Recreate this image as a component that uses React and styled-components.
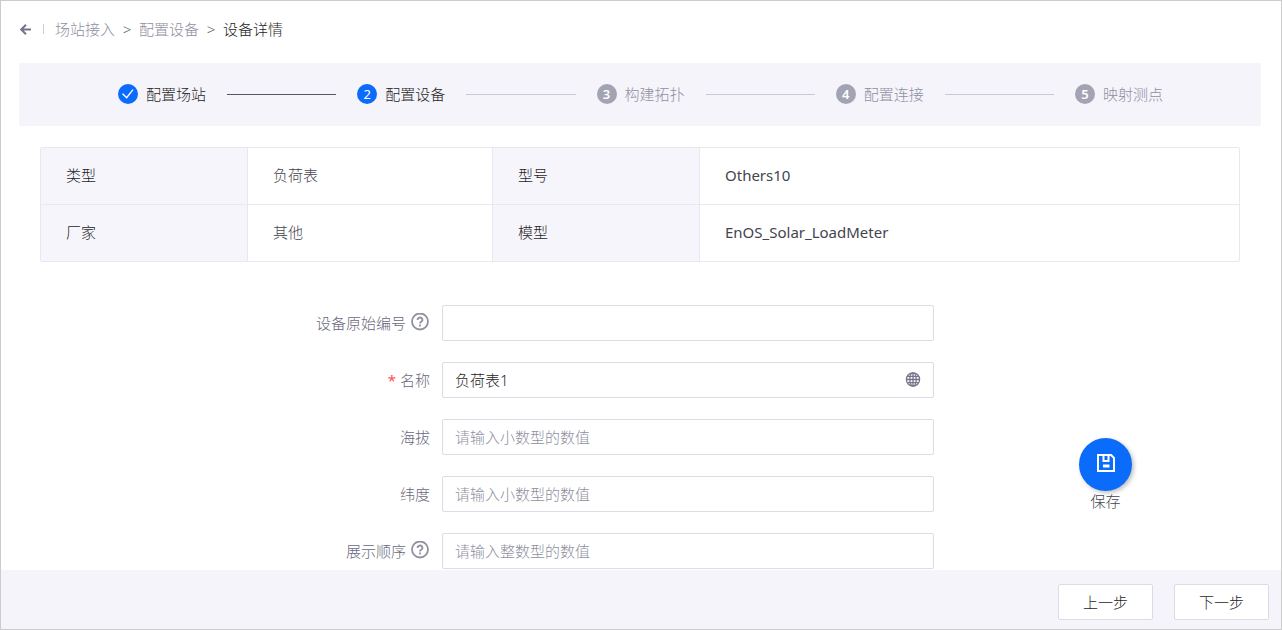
import React from "react";
import styled, { createGlobalStyle, ThemeProvider } from "styled-components";

const theme = {
  brand: "#0b6cfb",
  primary: "#1e1e26",
  secondary: "#44444e",
  label: "#68687c",
  muted: "#8f8fa1",
  error: "#ff4d55",
  surface: "#f5f4fa",
  borderColor: "#dcdce6",
  lineColor: "#e8e8ee"
};

const GlobalStyle = createGlobalStyle`
  * {
    box-sizing: border-box;
  }
  body {
    margin: 0;
    background-color: #fff;
  }
  body, button, input {
    font-family: "Noto Sans", "Noto Sans CJK SC", sans-serif;
    font-size: 15px;
    font-weight: 300;
    line-height: 20px;
  }
`;

const Page = styled.div`
  display: flex;
  flex-direction: column;
  height: 100vh;
  border: 1px solid #ccc;
  color: ${props => props.theme.primary};
`;

const Content = styled.main`
  flex: 1;
  min-height: 0;
  overflow-y: auto;
`;

const Breadcrumb = styled.nav`
  display: flex;
  align-items: center;
  height: 62px;
  padding: 0 18px 6px;
  color: ${props => props.theme.muted};
`;

const BackButton = styled.button`
  display: flex;
  padding: 0;
  border: 0;
  background: none;
  cursor: pointer;
  color: #74748a;
`;

const Divider = styled.span`
  width: 1px;
  height: 10px;
  margin: 0 11px 0 10px;
  background-color: #cdcdd6;
`;

const Crumb = styled.a`
  color: ${props => (props.$active ? props.theme.primary : props.theme.muted)};
  text-decoration: none;
`;

const Separator = styled.span`
  width: 24px;
  text-align: center;
  font-size: 15px;
  color: ${props => props.theme.label};
`;

const Steps = styled.ol`
  display: flex;
  align-items: center;
  gap: 21px;
  height: 63px;
  margin: 0 20px 0 18px;
  padding: 0 98px 1px 99px;
  list-style: none;
  background-color: ${props => props.theme.surface};
`;

const Step = styled.li`
  display: flex;
  align-items: center;
  gap: 21px;
  flex: ${props => (props.$last ? "none" : "1")};
`;

const StepTitle = styled.span`
  display: flex;
  align-items: center;
  gap: 8px;
  white-space: nowrap;
  color: ${props => (props.$reached ? props.theme.primary : props.theme.muted)};
`;

const StepBadge = styled.span`
  display: flex;
  align-items: center;
  justify-content: center;
  width: 20px;
  height: 20px;
  border-radius: 50%;
  font-size: 13px;
  font-weight: ${props => (props.$reached ? 400 : 600)};
  color: #fff;
  background-color: ${props => (props.$reached ? props.theme.brand : "#a3a3b3")};
`;

const StepLine = styled.span`
  flex: 1;
  height: 1px;
  background-color: ${props => (props.$done ? "#55555f" : "#c9c9d6")};
`;

const Details = styled.table`
  width: calc(100% - 80px);
  margin: 21px 40px 0 39px;
  table-layout: fixed;
  border-spacing: 0;
  border: 1px solid ${props => props.theme.lineColor};
  border-radius: 2px;
  tr + tr > * {
    height: 57px;
    border-top: 1px solid ${props => props.theme.lineColor};
  }
`;

const DetailLabel = styled.th`
  width: 207px;
  height: 56px;
  padding: 0 25px 2px;
  text-align: left;
  font-weight: inherit;
  background-color: #f6f5fb;
  border-right: 1px solid ${props => props.theme.lineColor};
`;

const DetailValue = styled.td`
  width: ${props => (props.$wide ? "auto" : "245px")};
  height: 56px;
  padding: 0 25px 2px;
  font-weight: ${props => (props.$wide ? 400 : 300)};
  color: ${props => props.theme.secondary};
  border-right: ${props => (props.$wide ? 0 : 1)}px solid
    ${props => props.theme.lineColor};
`;

const Body = styled.div`
  display: grid;
  grid-template-columns: 1fr 343px;
  padding: 43px 4px 0 39px;
`;

const DeviceForm = styled.form`
  display: grid;
  gap: 21px;
`;

const FormItem = styled.div`
  display: grid;
  grid-template-columns: 65fr 82fr;
  align-items: center;
  gap: 12px;
`;

const Label = styled.label`
  display: flex;
  align-items: center;
  justify-content: flex-end;
  gap: 4px;
  color: ${props => props.theme.label};
`;

const Required = styled.span`
  font-weight: 400;
  color: ${props => props.theme.error};
`;

const InputBox = styled.div`
  display: flex;
  align-items: center;
  height: 36px;
  padding: 0 12px;
  border: 1px solid ${props => props.theme.borderColor};
  border-radius: 2px;
  color: #74748a;
`;

const Input = styled.input`
  flex: 1;
  min-width: 0;
  padding: 0;
  border: 0;
  outline: 0;
  background: none;
  color: ${props => props.theme.primary};
  &::placeholder {
    color: ${props => props.theme.muted};
    opacity: 1;
  }
`;

const SaveArea = styled.aside`
  display: flex;
  flex-direction: column;
  align-items: center;
  padding-top: 133px;
`;

const SaveButton = styled.button`
  display: flex;
  align-items: center;
  justify-content: center;
  width: 53px;
  height: 53px;
  padding: 0 0 3px;
  border: 0;
  border-radius: 50%;
  cursor: pointer;
  color: #fff;
  background-color: ${props => props.theme.brand};
  box-shadow: 2px 2px 4px rgba(0, 0, 0, 0.25);
`;

const SaveText = styled.span`
  color: ${props => props.theme.secondary};
`;

const Footer = styled.footer`
  display: flex;
  justify-content: flex-end;
  gap: 21px;
  padding: 14px 12px 9px;
  background-color: ${props => props.theme.surface};
`;

const Button = styled.button`
  width: 95px;
  height: 36px;
  padding: 0 0 1px;
  border: 1px solid ${props => props.theme.borderColor};
  border-radius: 2px;
  cursor: pointer;
  color: ${props => props.theme.primary};
  background-color: #fff;
`;

function ArrowIcon() {
  return (
    <svg width="14" height="14" viewBox="0 0 14 14" fill="none" stroke="currentColor" strokeWidth="2">
      <path d="M7 2.7L2.2 7.5L7 12.3M2.5 7.5H12" />
    </svg>
  );
}

function CheckIcon() {
  return (
    <svg width="20" height="20" viewBox="0 0 20 20" fill="none" stroke="currentColor" strokeWidth="1.4">
      <path d="M4.6 9.8L8.6 13.8L15 5.6" />
    </svg>
  );
}

function HelpIcon() {
  return (
    <svg width="20" height="20" viewBox="0 0 20 20" fill="none" stroke="#9191a2" strokeWidth="1.8">
      <circle cx="10" cy="8.5" r="8" />
      <path d="M7.6 7A2.4 2.3 0 1 1 11.2 8.8Q10 9.5 10 10.5" />
      <path d="M10 11.6V13.4" />
    </svg>
  );
}

function GlobeIcon() {
  return (
    <svg width="16" height="16" viewBox="0 0 16 16" fill="none" stroke="currentColor" strokeWidth="1.3">
      <circle cx="8" cy="7.5" r="6.6" />
      <ellipse cx="8" cy="7.5" rx="3.2" ry="6.6" />
      <path d="M8 0.9V14.1M1.4 7.5H14.6M2.4 4.4H13.6M2.4 10.6H13.6" />
    </svg>
  );
}

function SaveIcon() {
  return (
    <svg width="18" height="18" viewBox="0 0 18 18" fill="none" stroke="currentColor" strokeWidth="2">
      <path d="M1 1H14L17 4V17H1Z" />
      <path d="M6.5 1V7H11.5V1" />
      <path d="M6 12H12.5" strokeWidth="3" />
    </svg>
  );
}

const steps = ["配置场站", "配置设备", "构建拓扑", "配置连接", "映射测点"];
const current = 1;

const details = [
  [["类型", "负荷表"], ["型号", "Others10"]],
  [["厂家", "其他"], ["模型", "EnOS_Solar_LoadMeter"]]
];

const fields = [
  { name: "serial", label: "设备原始编号", help: true },
  { name: "name", label: "名称", required: true, value: "负荷表1", global: true },
  { name: "altitude", label: "海拔", placeholder: "请输入小数型的数值" },
  { name: "latitude", label: "纬度", placeholder: "请输入小数型的数值" },
  { name: "order", label: "展示顺序", help: true, placeholder: "请输入整数型的数值" }
];

function StepBar() {
  return (
    <Steps>
      {steps.map((title, i) => {
        const last = i === steps.length - 1;
        return (
          <Step key={title} $last={last}>
            <StepTitle $reached={i <= current}>
              <StepBadge $reached={i <= current}>
                {i < current ? <CheckIcon /> : i + 1}
              </StepBadge>
              {title}
            </StepTitle>
            {!last && <StepLine $done={i < current} />}
          </Step>
        );
      })}
    </Steps>
  );
}

function DetailTable() {
  return (
    <Details>
      <tbody>
        {details.map((row, i) => (
          <tr key={i}>
            {row.map(([label, value], j) => (
              <React.Fragment key={label}>
                <DetailLabel scope="row">{label}</DetailLabel>
                <DetailValue $wide={j === 1}>{value}</DetailValue>
              </React.Fragment>
            ))}
          </tr>
        ))}
      </tbody>
    </Details>
  );
}

function FormField({ field }) {
  return (
    <FormItem>
      <Label htmlFor={field.name}>
        {field.required && <Required>*</Required>}
        {field.label}
        {field.help && <HelpIcon />}
      </Label>
      <InputBox>
        <Input
          type="text"
          id={field.name}
          name={field.name}
          defaultValue={field.value}
          placeholder={field.placeholder}
          required={field.required}
        />
        {field.global && <GlobeIcon />}
      </InputBox>
    </FormItem>
  );
}

export default function App() {
  return (
    <ThemeProvider theme={theme}>
      <GlobalStyle />
      <Page>
        <Content>
          <Breadcrumb>
            <BackButton type="button" aria-label="返回">
              <ArrowIcon />
            </BackButton>
            <Divider />
            <Crumb href="#sites">场站接入</Crumb>
            <Separator>&gt;</Separator>
            <Crumb href="#devices">配置设备</Crumb>
            <Separator>&gt;</Separator>
            <Crumb href="#detail" $active>
              设备详情
            </Crumb>
          </Breadcrumb>
          <StepBar />
          <DetailTable />
          <Body>
            <DeviceForm id="device">
              {fields.map(field => (
                <FormField key={field.name} field={field} />
              ))}
            </DeviceForm>
            <SaveArea>
              <SaveButton type="submit" form="device" aria-labelledby="save">
                <SaveIcon />
              </SaveButton>
              <SaveText id="save">保存</SaveText>
            </SaveArea>
          </Body>
        </Content>
        <Footer>
          <Button type="button">上一步</Button>
          <Button type="button">下一步</Button>
        </Footer>
      </Page>
    </ThemeProvider>
  );
}
